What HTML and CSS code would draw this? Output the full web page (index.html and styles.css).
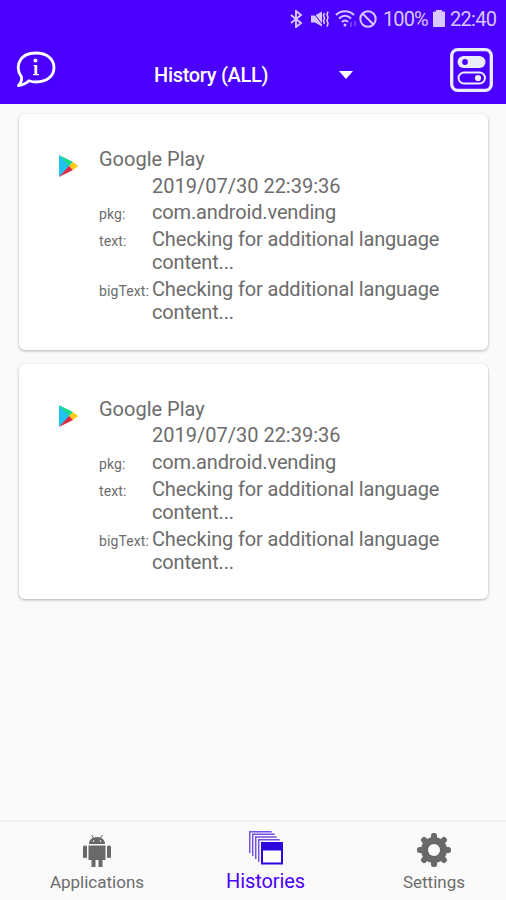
FILE: index.html
```
<!DOCTYPE html>
<html lang="en">
<head>
    <meta charset="UTF-8">
    <meta name="viewport" content="width=device-width, initial-scale=1.0">
    <title>History</title>
    <link rel="stylesheet" href="styles.css">
</head>
<body>
    <header class="header">
        <div class="status-bar">
            <svg class="bluetooth" width="13" height="18" viewBox="0 0 13 18" fill="none" stroke="currentColor" stroke-width="1.9"><path d="M1 5l10 8-5 4V1l5 4-10 8"/></svg>
            <svg class="mute" width="20" height="18" viewBox="0 0 20 18" fill="none" stroke="currentColor" stroke-width="2"><path d="M1 5.500h4l7-4v15l-7-4H1z" fill="currentColor" stroke="none"/><path d="M2 1l10 13" stroke="#4b00ff" stroke-width="1"/><path d="M14.500 3l-1 2.500 1 2.500-1 3 1 3M18 1.500l-1 3 1 3-1 3 1 3-1 3" stroke-width="1.600"/></svg>
            <svg class="wifi" width="23" height="18" viewBox="0 0 23 18" fill="none" stroke="currentColor" stroke-width="2"><path d="M1 5c5-5 13-5 18 0M4 8.500c4-3.600 8-3.600 12 0M7 12c2-2 4-2 6 0"/><circle cx="10" cy="15" r="1.500" fill="currentColor" stroke="none"/><path d="M16 12v5M20 11v5" stroke-width="1.500" opacity=".4"/></svg>
            <svg class="blocked" width="18" height="18" viewBox="0 0 18 18" fill="none" stroke="currentColor" stroke-width="2"><circle cx="9" cy="9" r="7.700"/><path d="M3.500 3.500l11 11"/></svg>
            <span class="percent">100%</span>
            <svg class="battery" width="12" height="17" viewBox="0 0 12 17" fill="currentColor"><path d="M3 0h6v1.500h2q1 0 1 1V16q0 1-1 1H1q-1 0-1-1V2.500q0-1 1-1h2z"/></svg>
            <span class="time">22:40</span>
        </div>
        <div class="toolbar">
            <svg class="info" width="40" height="38" viewBox="0 0 40 38" fill="none" stroke="#fff" stroke-width="2.800"><path d="M5.500 26C-1 17 2 2 20 2c11 0 18 6 18 14.500S31 31 20 31c-3 0-5-.5-7-1.300-3 2.700-6 4.300-10.500 4.800C5 32 6 29 5.500 26z" stroke-linejoin="round"/><circle cx="19.500" cy="9.500" r="2" fill="#fff" stroke="none"/><path d="M19.800 14v10"/><path d="M17.500 14.500h2.500M17 23.700h6" stroke-width="1.200"/></svg>
            <div class="spinner">
                <span class="spinner-text">History (ALL)</span>
                <svg width="14" height="8" viewBox="0 0 14 8"><path d="M0 0h14L7 8z" fill="#fff"/></svg>
            </div>
            <svg class="toggles" width="43" height="44" viewBox="0 0 43 44" fill="none" stroke="#ececf8"><rect x="1.700" y="1.700" width="39.600" height="40.600" rx="6" stroke-width="3.300"/><rect x="7.500" y="8" width="28" height="12" rx="6" fill="#ececf8" stroke="none"/><circle cx="15" cy="14" r="2.900" fill="#4b00ff" stroke="none"/><rect x="8.500" y="24.500" width="26.500" height="11" rx="5.500" stroke-width="2"/><circle cx="28" cy="30" r="3.100" fill="#ececf8" stroke="none"/></svg>
        </div>
    </header>

    <main class="list">
        <article class="card">
            <svg class="app-icon" width="20" height="24" viewBox="0 0 20 24"><path d="M1 1v22l11-11z" fill="#20c3ee"/><path d="M1 1l14 7-4 4z" fill="#18d88a"/><path d="M15 8l5 4-5 4-4-4z" fill="#fcca10"/><path d="M1 23l14-7-4-4z" fill="#df2842"/></svg>
            <div class="details">
                <div class="app-name">Google Play</div>
                <div class="row"><span class="key"></span><span class="value date">2019/07/30 22:39:36</span></div>
                <div class="row"><span class="key">pkg:</span><span class="value">com.android.vending</span></div>
                <div class="row"><span class="key">text:</span><span class="value">Checking for additional language<br>content...</span></div>
                <div class="row"><span class="key">bigText:</span><span class="value">Checking for additional language<br>content...</span></div>
            </div>
        </article>
        <article class="card">
            <svg class="app-icon" width="20" height="24" viewBox="0 0 20 24"><path d="M1 1v22l11-11z" fill="#20c3ee"/><path d="M1 1l14 7-4 4z" fill="#18d88a"/><path d="M15 8l5 4-5 4-4-4z" fill="#fcca10"/><path d="M1 23l14-7-4-4z" fill="#df2842"/></svg>
            <div class="details">
                <div class="app-name">Google Play</div>
                <div class="row"><span class="key"></span><span class="value date">2019/07/30 22:39:36</span></div>
                <div class="row"><span class="key">pkg:</span><span class="value">com.android.vending</span></div>
                <div class="row"><span class="key">text:</span><span class="value">Checking for additional language<br>content...</span></div>
                <div class="row"><span class="key">bigText:</span><span class="value">Checking for additional language<br>content...</span></div>
            </div>
        </article>
    </main>

    <nav class="bottom-nav">
        <a class="nav-item">
            <svg width="34" height="36" viewBox="0 -2 34 36" fill="#696969"><path d="M9 11c0-4 3-7 8-7s8 3 8 7zM8.500 12.500h17v14.500h-17z"/><rect x="3" y="12.500" width="4" height="12.500" rx="1.500"/><rect x="27" y="12.500" width="4" height="12.500" rx="1.500"/><path d="M11.500 26h4v8h-4zM18.500 26h4v8h-4z"/><path d="M11.500 2l2 3M22.500 2l-2 3" stroke="#696969" stroke-width="1"/><circle cx="13.500" cy="8" r=".8" fill="#fafafa"/><circle cx="20.500" cy="8" r=".8" fill="#fafafa"/></svg>
            <span>Applications</span>
        </a>
        <a class="nav-item active">
            <svg width="34" height="36" viewBox="0 0 34 36" fill="none" stroke="#7350dd" stroke-width="1.500"><path d="M.7 23V1.700h22M3.700 26V4.300h22M6.700 29V7h21M9.700 32V9.700h21"/><path d="M12 12h22v22.500H12z" fill="#2b06dd" stroke="none"/><path d="M14 20.500h18v12H14z" fill="#fff" stroke="none"/></svg>
            <span>Histories</span>
        </a>
        <a class="nav-item">
            <svg width="34" height="36" viewBox="0 0 34 36"><g fill="#696969" transform="translate(17 19)"><circle r="13"/><g id="teeth"><rect x="-3" y="-17" width="6" height="34" rx="2.500"/><rect x="-17" y="-3" width="34" height="6" rx="2.500"/></g><use href="#teeth" transform="rotate(45)"/><circle r="6" fill="#fafafa"/></g></svg>
            <span>Settings</span>
        </a>
    </nav>
</body>
</html>
```

FILE: styles.css
```
body {
    margin: 0;
    height: 900px;
    display: flex;
    flex-direction: column;
    background: #fafafa;
    font-family: Roboto, sans-serif;
    color: #6c6c6c;
    overflow: hidden;
}
.header {
    height: 104px;
    background: #4b00ff;
    color: #fff;
}
.status-bar {
    height: 37px;
    padding-right: 9px;
    display: flex;
    align-items: center;
    justify-content: flex-end;
    color: #d8c8ff;
    font-size: 20px;
}
.bluetooth {
    margin-right: 2px;
}
.mute {
    margin-left: 5px;
}
.wifi {
    margin-left: 5px;
}
.blocked {
    margin-left: 1px;
}
.percent {
    width: 45px;
    margin-left: 6px;
    letter-spacing: -0.9px;
}
.battery {
    margin-left: 5px;
}
.time {
    width: 47px;
    margin-left: 5px;
    letter-spacing: -0.7px;
}
.toolbar {
    display: flex;
    align-items: flex-start;
    justify-content: space-between;
    padding: 11px 13px 0 16px;
}
.info {
    margin-top: 3px;
}
.spinner {
    display: flex;
    align-items: center;
    justify-content: space-between;
    width: 199px;
    height: 54px;
    margin-right: -1px;
}
.spinner-text {
    font-size: 20px;
    font-weight: 500;
    letter-spacing: -0.3px;
}
.list {
    flex: 1;
    display: flex;
    flex-direction: column;
    gap: 14px;
    padding: 10px 18px 0 19px;
}
.card {
    height: 235.5px;
    box-sizing: border-box;
    padding: 34px 0 0 39px;
    display: flex;
    background: #fff;
    border-radius: 6px;
    box-shadow: 0 1px 3px rgba(0, 0, 0, 0.3);
}
.app-icon {
    margin-top: 6px;
}
.details {
    margin-left: 21px;
    font-size: 20px;
    line-height: 23.3px;
    letter-spacing: -0.15px;
}
.app-name,
.date {
    letter-spacing: 0;
}
.row {
    display: flex;
    align-items: baseline;
    margin-top: 3.4px;
}
.key {
    width: 53px;
    font-size: 14px;
    line-height: 16px;
    letter-spacing: 0.1px;
    white-space: nowrap;
}
.bottom-nav {
    height: 80px;
    box-sizing: border-box;
    border-top: 2px solid #f1f1f1;
    padding: 9px 25px 0 50px;
    display: flex;
    justify-content: space-between;
}
.nav-item {
    width: 94px;
    display: flex;
    flex-direction: column;
    align-items: center;
    font-size: 17px;
    line-height: 20px;
    white-space: nowrap;
}
.nav-item span {
    margin-top: 5px;
}
.active {
    margin-top: -1px;
    font-size: 20px;
    letter-spacing: -0.1px;
    color: #4b00ff;
}
```
